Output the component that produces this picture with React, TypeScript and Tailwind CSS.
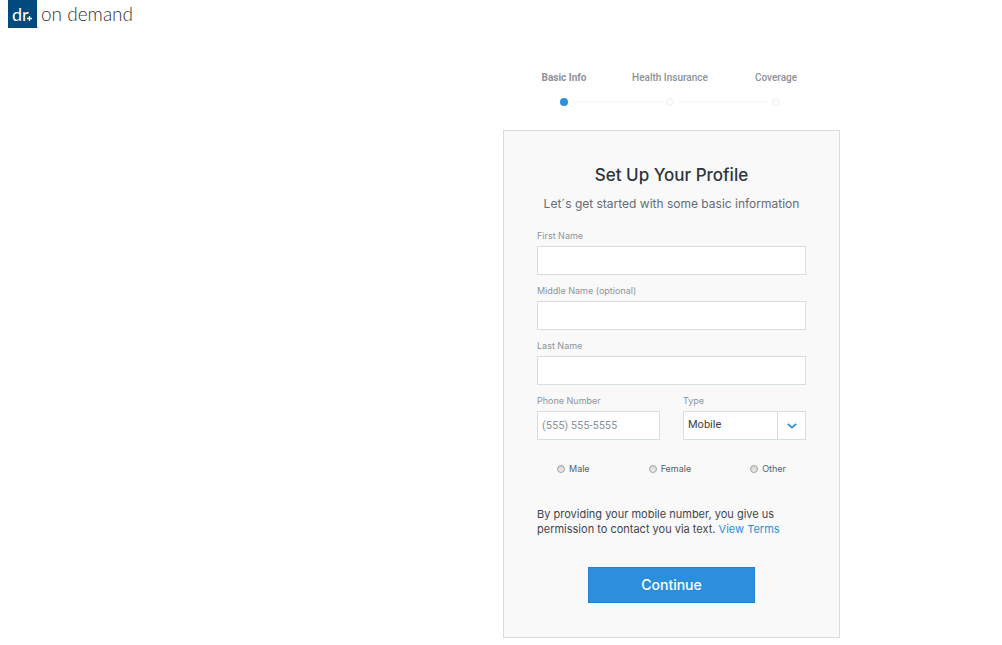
import { useState } from "react";
import type { FormEvent } from "react";

const steps = ["Basic Info", "Health Insurance", "Coverage"];

const nameFields = [
  { id: "firstName", label: "First Name" },
  { id: "middleName", label: "Middle Name (optional)" },
  { id: "lastName", label: "Last Name" },
];

const genders = ["Male", "Female", "Other"];

const labelClass = "block mb-[2px] text-[9px] leading-4 text-[#8f939b]";
const inputClass = "block w-full h-[29px] px-1 border border-[#d5dfdd] bg-white text-[11px] font-[Roboto,sans-serif] outline-none focus:border-[#2b8fdb]";

function Logo() {
  return (
    <a href="#" className="flex items-start w-fit" aria-label="Doctor On Demand">
      <svg width="31" height="28" viewBox="0 0 31 28">
        <rect width="29" height="28" fill="#02497d" />
        <text x="4" y="21" fill="#fff" fontSize="18" fontFamily="Lato, sans-serif">dr</text>
        <path d="M19 18.5h5M21.5 16v5" stroke="#fff" strokeWidth="1.3" />
        <path d="M29 27.5h2" stroke="#c9c9c9" />
      </svg>
      <span className="pl-[2px] text-[19px] leading-7 font-light text-[#333] font-[Lato,sans-serif]">on demand</span>
    </a>
  );
}

function Steps({ current }: { current: number }) {
  return (
    <ol className="flex justify-center h-10 pr-[3px]">
      {steps.map((step, i) => (
        <li key={step} className="w-[106px] flex flex-col items-center">
          <span className={`text-[10px] leading-4 whitespace-nowrap font-[Roboto,sans-serif] text-[#8d9199] ${i === current ? "font-bold" : "font-medium"}`}>
            {step}
          </span>
          <div className="mt-3 w-full flex items-center gap-1">
            <span className={`h-[2px] flex-1 ${i > 0 ? "bg-[#f9f9f9]" : ""}`} />
            <span className={`size-2 rounded-full ${i === current ? "bg-[#2b8fdb]" : "border-2 border-[#f6f6f6]"}`} />
            <span className={`h-[2px] flex-1 ${i < steps.length - 1 ? "bg-[#f9f9f9]" : ""}`} />
          </div>
        </li>
      ))}
    </ol>
  );
}

export default function App() {
  const [gender, setGender] = useState("");

  const handleSubmit = (e: FormEvent) => {
    e.preventDefault();
  };

  return (
    <div className="min-h-screen bg-white font-[Inter,sans-serif]">
      <header className="px-2">
        <Logo />
      </header>

      <main className="grid grid-cols-2 pt-[42px] pb-[7px]">
        <section className="col-start-2 ml-[2px] w-full max-w-[337px]">
          <Steps current={0} />

          {/* Profile form */}
          <form onSubmit={handleSubmit} className="mt-5 px-[33px] pt-8 pb-[34px] bg-[#f9f9f9] border border-[#dcdcdc]">
            <h1 className="text-center text-[17px] leading-6 font-medium text-[#2e353d]">Set Up Your Profile</h1>
            <p className="mt-[9px] text-center text-[12px] leading-4 text-[#646b76] whitespace-nowrap">Let´s get started with some basic information</p>

            <div className="mt-4 space-y-2">
              {nameFields.map((field) => (
                <div key={field.id}>
                  <label htmlFor={field.id} className={labelClass}>{field.label}</label>
                  <input id={field.id} type="text" className={inputClass} />
                </div>
              ))}

              <div className="grid grid-cols-2 gap-[23px]">
                <div>
                  <label htmlFor="phone" className={labelClass}>Phone Number</label>
                  <input id="phone" type="tel" placeholder="(555) 555-5555" className={`${inputClass} placeholder:text-[#8d9199]`} />
                </div>
                <div>
                  <label htmlFor="phoneType" className={labelClass}>Type</label>
                  <div className="relative">
                    <select id="phoneType" className={`${inputClass} appearance-none text-[#3a4048]`}>
                      <option>Mobile</option>
                      <option>Home</option>
                      <option>Work</option>
                    </select>
                    <span className="absolute inset-y-0 right-0 w-[29px] flex items-center justify-center border-l border-[#d5dfdd] pointer-events-none">
                      <svg width="10" height="6" viewBox="0 0 10 6" fill="none" stroke="#2b8fdb" strokeWidth="1.8">
                        <path d="M0.8 0.8L5 4.6L9.2 0.8" />
                      </svg>
                    </span>
                  </div>
                </div>
              </div>
            </div>

            <div className="mt-[21px] px-5 flex justify-between">
              {genders.map((g) => (
                <label key={g} className="flex items-center gap-1 text-[9px] leading-4 text-[#565d68]">
                  <input
                    type="radio"
                    name="gender"
                    value={g}
                    checked={gender === g}
                    onChange={() => setGender(g)}
                    className="size-2 appearance-none rounded-full border border-[#a3a3a3] bg-linear-to-b from-[#d6d6d6] to-[#ececec] checked:from-[#2b8fdb] checked:to-[#2b8fdb]"
                  />
                  {g}
                </label>
              ))}
            </div>

            <p className="mt-[30px] text-[11px] leading-[15px] text-[#3f454e]">
              By providing your mobile number, you give us permission to contact you via text.{" "}
              <a href="#" className="text-[#2b8fdb]">View Terms</a>
            </p>

            <button type="submit" className="block mx-auto mt-[30px] w-[167px] h-9 bg-[#2b8fdb] border border-[#1f82cc] text-white text-[14px] leading-5 font-medium">
              Continue
            </button>
          </form>
        </section>
      </main>
    </div>
  );
}
